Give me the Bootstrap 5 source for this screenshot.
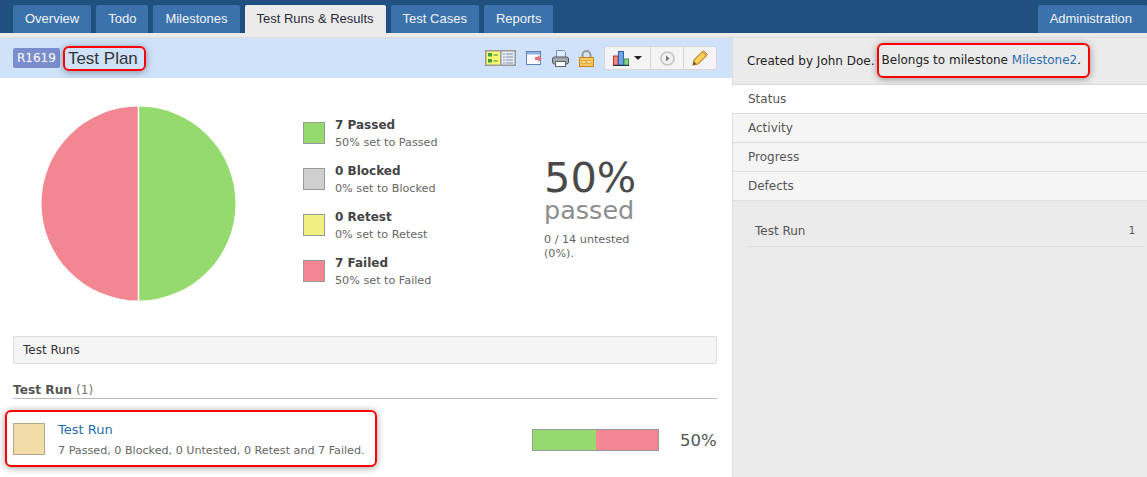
<!DOCTYPE html>
<html lang="en">
<head>
    <meta charset="UTF-8">
    <title>Test Plan</title>
    <link href="https://cdn.jsdelivr.net/npm/bootstrap@5.3.3/dist/css/bootstrap.min.css" rel="stylesheet">
    <style>
        html, body { height: 477px; overflow: hidden; }
        body { font-family: "DejaVu Sans", Verdana, sans-serif; font-size: 12px; color: #444; background: #fff; }

        /* top tabs */
        .top-bar { background: #20507f; height: 33px; padding: 5px 0 0 13px; gap: 5px; }
        .top-tab { font-family: "Liberation Sans", Arial, sans-serif; font-size: 13px; line-height: 28px; height: 28px; padding: 0 12px; background: #3c72ab; color: #f1f5f9; border-radius: 2px 2px 0 0; text-decoration: none; }
        .top-tab.current { background: #ebebeb; color: #2b2b3a; }
        .top-tab:last-child { padding-right: 15px; }
        .top-strip { height: 5px; background: #ebebeb; border-bottom: 1px solid #ddd; }

        .main-pane { width: 732px; height: 439px; }
        .title-bar { background: #cfe2fa; height: 40px; padding: 0 15px 0 13px; }
        .plan-id { font-size: 12px; background: #7a8ece; color: #fff; border-radius: 2px; padding: 0 4px; line-height: 20px; font-weight: 500; margin-right: 3px; }
        .callout { border: 2px solid #f00; border-radius: 6px; box-shadow: 0 1px 7px rgba(40,40,40,.45); }
        .plan-title { font-family: "Liberation Sans", Arial, sans-serif; font-size: 17px; color: #333; padding: 0 6px 0 3px; line-height: 21px; }

        .tool-icons { gap: 10px; }
        .tool-group { border: 1px solid #d6d6d6; border-radius: 3px; background: #f4f4f4; height: 24px; }
        .tool-cell { height: 22px; width: 33px; border-left: 1px solid #d6d6d6; }
        .tool-cell:first-child { border-left: 0; width: 45px; }
        .caret-down { width: 0; height: 0; border: 4px solid transparent; border-top: 4px solid #222; border-bottom: 0; margin-left: 5px; }

        .chart-area { height: 252px; }
        .pie-box { width: 303px; padding: 28px 0 0 41px; }
        .legend-box { width: 241px; padding-top: 37px; gap: 14px; }
        .legend-row { height: 32px; gap: 10px; }
        .legend-text { padding-top: 2px; }
        .swatch { width: 22px; height: 22px; border: 1px solid #999; flex: none; margin-top: 7px; }
        .legend-name { font-size: 12px; font-weight: 700; line-height: 17px; }
        .legend-sub { font-size: 11.2px; line-height: 18px; color: #666; }
        .pct-box { padding-top: 81px; }
        .pct-big { font-size: 41.5px; line-height: 38px; color: #4a4a4a; }
        .pct-label { font-size: 25.5px; line-height: 26px; color: #8e8e8e; }
        .pct-note { font-size: 11.2px; line-height: 14px; color: #666; margin-top: 10px; width: 110px; }

        .runs-head { margin: 6px 15px 0 13px; height: 28px; line-height: 27px; background: #f5f5f5; border: 1px solid #ddd; border-radius: 2px; padding-left: 9px; color: #333; }
        .group-head { margin: 15px 15px 0 13px; height: 20px; line-height: 22px; border-bottom: 1px solid #bbb; font-size: 12.2px; }
        .group-head b { color: #555; }
        .group-head span { color: #777; }
        .run-row { margin: 11px 15px 0 5px; }
        .run-box { width: 372px; height: 57px; padding: 0 6px; gap: 13px; }
        .run-swatch { width: 32px; height: 32px; background: #f2dca7; border: 1px solid #b5a888; }
        .run-info { margin-top: 5px; }
        .run-name { color: #1f6fb2; font-size: 13px; line-height: 19px; text-decoration: none; display: block; }
        .run-sub { font-size: 11.15px; line-height: 23px; color: #666; white-space: nowrap; }
        .run-bar { width: 127px; height: 22px; border: 1px solid #999; margin: 3px 0 0 155px; }
        .bar-pass { width: 50%; background: #95da6e; }
        .bar-fail { width: 50%; background: #f38791; }
        .run-pct { font-size: 16.5px; color: #555; margin: 5px 0 0 21px; }

        .side-pane { flex: 1; background: #ebebeb; border-left: 1px solid #ddd; height: 439px; }
        .side-head { height: 47px; padding-left: 14px; color: #222; border-bottom: 1px solid #ddd; }
        .side-note { padding: 0 7px 0 3px; line-height: 31px; margin: -1px 0 0 2px; }
        .side-note a { color: #2a6db0; text-decoration: none; }
        .side-tab { height: 29px; line-height: 28px; padding-left: 15px; background: #f5f5f5; border-bottom: 1px solid #ddd; color: #555; }
        .side-tab.current { background: #fff; margin-left: -1px; padding-left: 16px; }
        .side-row { margin: 16px 3px 0 14px; height: 30px; padding: 0 9px 2px 8px; border-bottom: 1px solid #ddd; color: #555; }
        .side-count { font-size: 10px; }
    </style>
</head>
<body>

    <!-- TOP NAV -->
    <div class="top-bar d-flex">
        <a class="top-tab" href="#">Overview</a>
        <a class="top-tab" href="#">Todo</a>
        <a class="top-tab" href="#">Milestones</a>
        <a class="top-tab current" href="#">Test Runs &amp; Results</a>
        <a class="top-tab" href="#">Test Cases</a>
        <a class="top-tab" href="#">Reports</a>
        <a class="top-tab ms-auto" href="#">Administration</a>
    </div>
    <div class="top-strip"></div>

    <div class="d-flex">
        <!-- LEFT -->
        <div class="main-pane">
            <div class="title-bar d-flex align-items-center">
                <span class="plan-id">R1619</span>
                <span class="callout plan-title">Test Plan</span>
                <div class="tool-icons d-flex align-items-center ms-auto">
                    <!-- view toggle -->
                    <svg width="31" height="16" viewBox="0 0 31 16"><rect x=".75" y=".75" width="15" height="14.5" fill="#fdf86f" stroke="#999" stroke-width="1.5"/><rect x="15.75" y=".75" width="14.5" height="14.5" fill="#e4edf7" stroke="#999" stroke-width="1.5"/><path d="M3 3h4v3.5H3zM3 9h4v3.5H3z" fill="#35a044"/><path d="M8.5 5h4.5M8.5 11h4.5" stroke="#3a8a4a"/><path d="M18 4h2M21 4h7M18 7h2M21 7h7M18 10h2M21 10h7M18 13h2M21 13h7" stroke="#8a949e"/></svg>
                    <!-- export -->
                    <svg width="16" height="16" viewBox="0 0 16 16"><rect x=".5" y="1.5" width="14" height="13" fill="#fff" stroke="#5d86c0"/><rect x="1" y="2" width="13" height="2.5" fill="#8fb3e0"/><path d="M9 7h3V5l4 3.5-4 3.5v-2H9z" fill="#e4737a"/></svg>
                    <!-- print -->
                    <svg width="17" height="17" viewBox="0 0 17 17"><path d="M4.5 .5h7l2 2v6h-9z" fill="#e3eefa" stroke="#6d95c9"/><rect x=".5" y="7" width="16" height="7" rx="2" fill="#a3a8ae" stroke="#50565c"/><rect x="3.5" y="11.5" width="10" height="5" fill="#fff" stroke="#5f6468"/></svg>
                    <!-- lock -->
                    <svg width="15" height="17" viewBox="0 0 15 17"><path d="M3.5 8V5a4 4 0 0 1 8 0v3" fill="none" stroke="#9a9a9a" stroke-width="2"/><rect x=".5" y="7.5" width="14" height="9" fill="#f9c95f" stroke="#cc8419"/><path d="M3 10.5h3.5v3H3zM8 10.5h4v3H8z" fill="#ffe9a6" stroke="#cc8419" stroke-width=".6"/></svg>
                    <div class="tool-group d-flex">
                        <div class="tool-cell d-flex align-items-center justify-content-center">
                            <svg width="16" height="15" viewBox="0 0 16 15"><rect x=".5" y="5" width="4.5" height="9" fill="#f08a8a" stroke="#c33"/><rect x="5.5" y=".5" width="5" height="13.5" fill="#6ea5e4" stroke="#2c62b0"/><rect x="11" y="8" width="4.5" height="6" fill="#8ccf8c" stroke="#3a903a"/><path d="M0 14.5h16" stroke="#234"/></svg>
                            <span class="caret-down"></span>
                        </div>
                        <div class="tool-cell d-flex align-items-center justify-content-center">
                            <svg width="15" height="15" viewBox="0 0 15 15"><circle cx="7.5" cy="7.5" r="6.5" fill="#f0f0f0" stroke="#c4c4c4" stroke-width="1.5"/><path d="M6 4.5l3.5 3-3.5 3z" fill="#777"/></svg>
                        </div>
                        <div class="tool-cell d-flex align-items-center justify-content-center">
                            <svg width="16" height="16" viewBox="0 0 16 16"><path d="M1 15l1-5L10.5 1.5l4 4L6 14z" fill="#f8d25a" stroke="#c68a2b" stroke-width="1.2"/><path d="M10.5 1.5l1-1 4 4-1 1z" fill="#f3b49a" stroke="#c68a2b"/><path d="M1 15l.8-3.6 2.8 2.8z" fill="#6b4a2a"/></svg>
                        </div>
                    </div>
                </div>
            </div>

            <div class="chart-area d-flex">
                <div class="pie-box">
                    <svg width="195" height="195" viewBox="0 0 195 195">
                        <path d="M97.5 .5a97 97 0 0 1 0 194z" fill="#95da6e"/>
                        <path d="M97.5 .5a97 97 0 0 0 0 194z" fill="#f38791"/>
                        <path d="M97.5 0v195" stroke="#fff" stroke-width="1.5"/>
                    </svg>
                </div>
                <div class="legend-box d-flex flex-column">
                    <div class="legend-row d-flex">
                        <span class="swatch" style="background:#95da6e"></span>
                        <div class="legend-text"><div class="legend-name">7 Passed</div><div class="legend-sub">50% set to Passed</div></div>
                    </div>
                    <div class="legend-row d-flex">
                        <span class="swatch" style="background:#cfcfcf"></span>
                        <div class="legend-text"><div class="legend-name">0 Blocked</div><div class="legend-sub">0% set to Blocked</div></div>
                    </div>
                    <div class="legend-row d-flex">
                        <span class="swatch" style="background:#eff07f"></span>
                        <div class="legend-text"><div class="legend-name">0 Retest</div><div class="legend-sub">0% set to Retest</div></div>
                    </div>
                    <div class="legend-row d-flex">
                        <span class="swatch" style="background:#f38791"></span>
                        <div class="legend-text"><div class="legend-name">7 Failed</div><div class="legend-sub">50% set to Failed</div></div>
                    </div>
                </div>
                <div class="pct-box">
                    <div class="pct-big">50%</div>
                    <div class="pct-label">passed</div>
                    <div class="pct-note">0 / 14 untested (0%).</div>
                </div>
            </div>

            <div class="runs-head">Test Runs</div>
            <div class="group-head"><b>Test Run</b> <span>(1)</span></div>
            <div class="run-row d-flex align-items-center">
                <div class="callout run-box d-flex align-items-center">
                    <span class="run-swatch"></span>
                    <div class="run-info">
                        <a class="run-name" href="#">Test Run</a>
                        <div class="run-sub">7 Passed, 0 Blocked, 0 Untested, 0 Retest and 7 Failed.</div>
                    </div>
                </div>
                <div class="run-bar d-flex"><div class="bar-pass"></div><div class="bar-fail"></div></div>
                <div class="run-pct">50%</div>
            </div>
        </div>

        <!-- RIGHT -->
        <div class="side-pane">
            <div class="side-head d-flex align-items-center">
                <span>Created by John Doe.</span>
                <span class="callout side-note">Belongs to milestone <a href="#">Milestone2</a>.</span>
            </div>
            <div class="side-tab current">Status</div>
            <div class="side-tab">Activity</div>
            <div class="side-tab">Progress</div>
            <div class="side-tab">Defects</div>
            <div class="side-row d-flex justify-content-between align-items-center">
                <span>Test Run</span><span class="side-count">1</span>
            </div>
        </div>
    </div>

</body>
</html>
